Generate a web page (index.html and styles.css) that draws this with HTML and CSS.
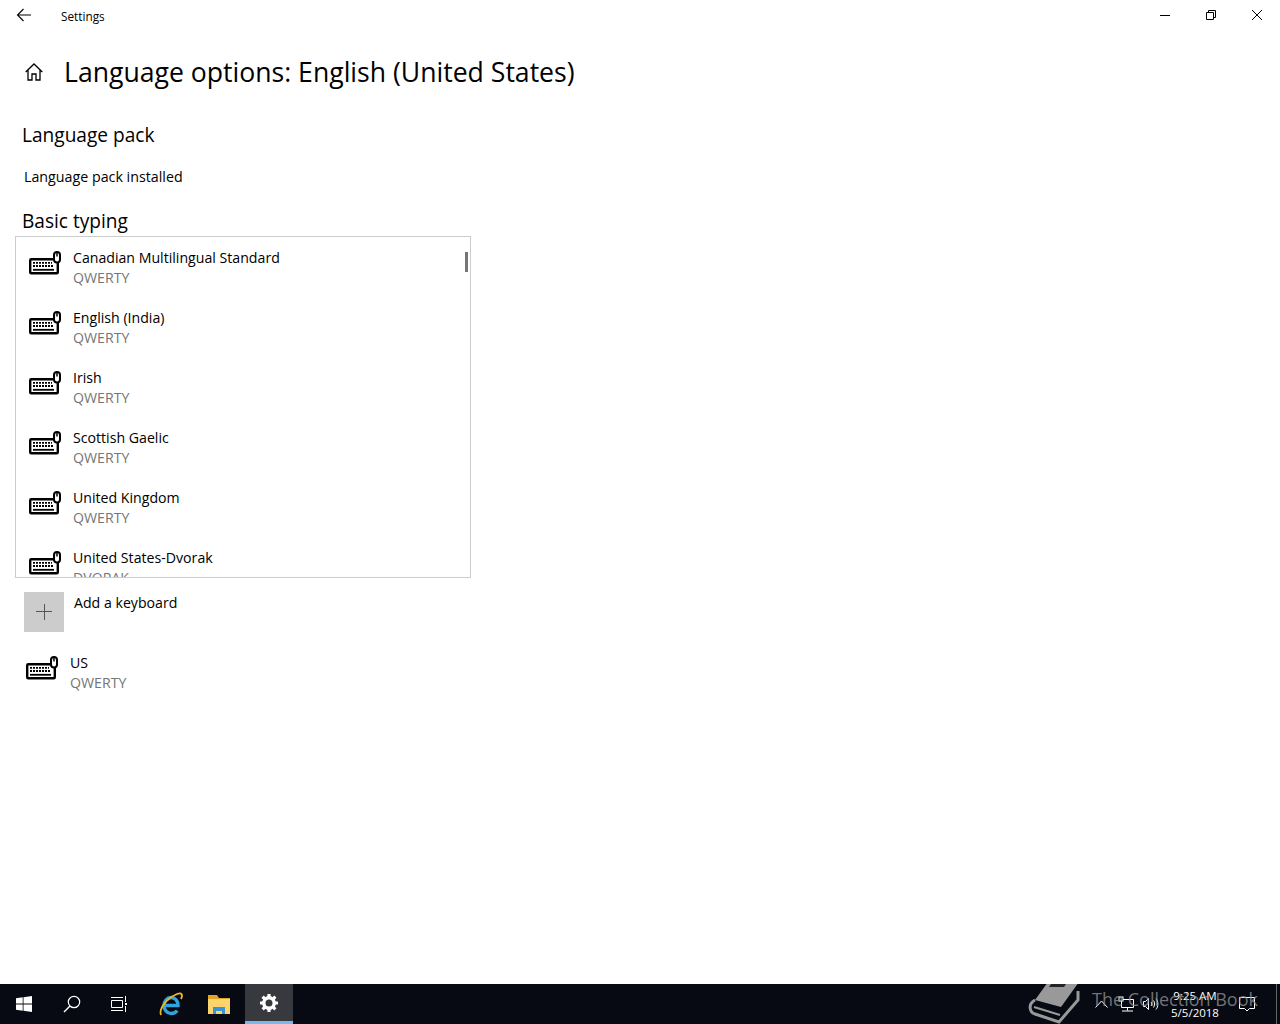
FILE: index.html
```html
<!DOCTYPE html>
<html lang="en">
<head>
<meta charset="utf-8">
<title>Settings</title>
<link rel="stylesheet" href="styles.css">
</head>
<body>
<svg class="defs" width="0" height="0">
  <symbol id="kbd" viewBox="0 0 32 24">
    <rect x="1.200" y="8.200" width="27.600" height="14" rx="1" fill="#fff" stroke="#000" stroke-width="2.400"/>
    <path d="M4 11.800h19M4 15h21" fill="none" stroke="#000" stroke-width="1.800" stroke-dasharray="2 1"/>
    <path d="M4 18.800h21" fill="none" stroke="#000" stroke-width="1.800"/>
    <rect x="25" y="1" width="6" height="10.500" rx="3" fill="#fff" stroke="#000" stroke-width="2"/>
    <path d="M28 2v3.500" stroke="#000" stroke-width="1.500"/>
  </symbol>
</svg>
<div class="window">
  <header class="titlebar">
    <svg class="back" width="16" height="16" viewBox="0 0 16 16"><path d="M15 8H1.500M7.500 2l-6 6 6 6" fill="none" stroke="#000" stroke-width="1.100"/></svg>
    <span class="app-name">Settings</span>
    <div class="controls">
      <div class="ctl"><svg width="10" height="10" viewBox="0 0 10 10"><path d="M0 5.500h10" stroke="#000"/></svg></div>
      <div class="ctl"><svg width="10" height="10" viewBox="0 0 10 10"><path d="M.5 2.500h7v7h-7zM2.500 2.500v-2h7v7h-2" fill="none" stroke="#000"/></svg></div>
      <div class="ctl"><svg width="10" height="10" viewBox="0 0 10 10"><path d="M0 0l10 10M10 0L0 10" stroke="#000"/></svg></div>
    </div>
  </header>
  <main class="content">
    <div class="page-head">
      <svg class="home" width="18" height="18" viewBox="0 0 18 18"><path d="M.7 9L9 1l8.300 8M3 7v10h4v-6h4v6h4V7" fill="none" stroke="#000" stroke-width="1.300"/></svg>
      <h1>Language options: English (United States)</h1>
    </div>
    <h2 class="sec-pack">Language pack</h2>
    <p class="installed">Language pack installed</p>
    <h2 class="sec-typing">Basic typing</h2>
    <div class="listbox">
      <ul class="list">
        <li class="row"><svg class="kbd"><use href="#kbd"/></svg><div class="label"><span class="name">Canadian Multilingual Standard</span><span class="sub">QWERTY</span></div></li>
        <li class="row"><svg class="kbd"><use href="#kbd"/></svg><div class="label"><span class="name">English (India)</span><span class="sub">QWERTY</span></div></li>
        <li class="row"><svg class="kbd"><use href="#kbd"/></svg><div class="label"><span class="name">Irish</span><span class="sub">QWERTY</span></div></li>
        <li class="row"><svg class="kbd"><use href="#kbd"/></svg><div class="label"><span class="name">Scottish Gaelic</span><span class="sub">QWERTY</span></div></li>
        <li class="row"><svg class="kbd"><use href="#kbd"/></svg><div class="label"><span class="name">United Kingdom</span><span class="sub">QWERTY</span></div></li>
        <li class="row"><svg class="kbd"><use href="#kbd"/></svg><div class="label"><span class="name">United States-Dvorak</span><span class="sub">DVORAK</span></div></li>
      </ul>
      <div class="thumb"></div>
    </div>
    <div class="add">
      <div class="add-btn"><svg width="16" height="16" viewBox="0 0 16 16"><path d="M8.500 0v16M0 7.500h16" stroke="#555" stroke-width="1"/></svg></div>
      <span class="name add-label">Add a keyboard</span>
    </div>
    <div class="current">
      <svg class="kbd"><use href="#kbd"/></svg>
      <div class="label"><span class="name">US</span><span class="sub">QWERTY</span></div>
    </div>
  </main>
  <footer class="taskbar">
    <div class="tb-btn"><svg width="16" height="16" viewBox="0 0 16 16"><path d="M0 2.300l6.700-1v6.300H0zM7.500 1.200L16 0v7.600H7.500zM0 8.400h6.700v6.300l-6.700-1zM7.500 8.400H16V16l-8.500-1.200z" fill="#fff"/></svg></div>
    <div class="tb-btn"><svg width="18" height="18" viewBox="0 0 18 18"><circle cx="11" cy="7" r="5.700" fill="none" stroke="#fff" stroke-width="1.200"/><path d="M7 11l-6 6" stroke="#fff" stroke-width="1.400"/></svg></div>
    <div class="tb-btn"><svg width="18" height="16" viewBox="0 0 18 16"><path d="M.5 4.500h11v7H.5zM0 1.500h12M0 14.500h12" fill="none" stroke="#fff"/><path d="M14.500 0v6M14.500 10v6" stroke="#fff"/><rect x="14" y="7" width="2" height="2" fill="#fff"/></svg></div>
    <div class="tb-btn tb-ie"><svg width="26" height="26" viewBox="0 0 26 26"><path d="M7 14.500h13c0-5-3-8-7-8s-7 3.500-7 8 3 8 7 8c3 0 5-1 6-3" fill="none" stroke="#2fa4de" stroke-width="3.400"/><path d="M3 24C1 19 6 9 19 3c5-2 6 1 4 5" fill="none" stroke="#f0b429" stroke-width="1.800"/></svg></div>
    <div class="tb-btn"><svg width="22" height="20" viewBox="0 0 22 20"><path d="M0 1h9l2 3h11v3H0z" fill="#e0a526"/><path d="M0 5h22v15H0z" fill="#fbd56b"/><path d="M5 13h12v7h-3v-3H8v3H5z" fill="#3a94d0"/></svg></div>
    <div class="tb-btn tb-active"><svg width="18" height="18" viewBox="0 0 18 18"><circle cx="9" cy="9" r="5.200" fill="none" stroke="#fff" stroke-width="3.400"/><path d="M9 0v3.500M9 14.500V18M0 9h3.500M14.500 9H18M2.600 2.600l2.500 2.500M12.900 12.900l2.500 2.500M15.400 2.600l-2.500 2.500M5.100 12.900l-2.500 2.500" stroke="#fff" stroke-width="3.200"/></svg></div>
    <div class="tray">
      <svg width="13" height="8" viewBox="0 0 13 8"><path d="M.5 7.500l6-6.500 6 6.500" fill="none" stroke="#fff"/></svg>
      <svg class="tray-net" width="16" height="16" viewBox="0 0 16 16"><path d="M3.500 3.500h12v8h-12zM9.500 11.500v3M4 15h11" fill="none" stroke="#fff"/><rect x="1" y="1" width="4" height="4" fill="#000" stroke="#fff"/></svg>
      <svg class="tray-vol" width="16" height="16" viewBox="0 0 16 16"><path d="M.5 5.500h2l3-3v11l-3-3h-2zM8 6c1 1 1 3 0 4M10.500 4.500c1.500 2 1.500 5 0 7M13 2.500c2.500 3 2.500 8 0 11" fill="none" stroke="#fff"/></svg>
      <div class="clock"><span>9:25 AM</span><span>5/5/2018</span></div>
      <svg class="tray-note" width="16" height="16" viewBox="0 0 16 16"><path d="M.5 1.500h15v11h-5l-2.500 2.500-2.500-2.500h-5z" fill="none" stroke="#fff"/></svg>
    </div>
    <div class="desk-edge"></div>
    <div class="watermark">
      <svg class="book" width="60" height="42" viewBox="0 0 60 42"><path d="M23 0h31L36 25 10 18z" fill="#999"/><path d="M26 2h15l-2 3H24z" fill="#22242a"/><path d="M10 18C3 22 4 30 10 32l24 8 19-22v-9" fill="none" stroke="#999" stroke-width="3"/><path d="M9 25l26 8" stroke="#999" stroke-width="2"/></svg>
      <span>The Collection Book</span>
    </div>
  </footer>
</div>
</body>
</html>
```
FILE: styles.css
```css
* { box-sizing: border-box; }
html, body { margin: 0; padding: 0; height: 100%; }
body { font-family: "Open Sans", "Noto Sans", "Liberation Sans", sans-serif; background: #fff; color: #000; overflow: hidden; }
.defs { display: block; height: 0; }
.window { display: flex; flex-direction: column; height: 1024px; }
.titlebar { flex: none; height: 30px; display: flex; align-items: center; padding-left: 16px; }
.back { flex: none; }
.app-name { margin-left: 29px; font-size: 11.800px; margin-top: 2px; }
.controls { margin-left: auto; display: flex; }
.ctl { width: 46px; height: 30px; display: flex; align-items: center; justify-content: center; }
.content { flex: 1; min-height: 0; padding: 0 0 0 15px; }
.page-head { display: flex; align-items: center; height: 40px; margin-top: 22px; padding-left: 10px; }
.home { flex: none; }
h1 { margin: 0 0 0 21px; font-size: 26.600px; font-weight: 400; line-height: 40px; white-space: nowrap; }
h2 { margin: 0; font-size: 19.100px; font-weight: 400; line-height: 28px; padding-left: 7px; }
.sec-pack { margin-top: 29px; }
.installed { margin: 18px 0 0 9px; font-size: 14.250px; line-height: 20px; }
.sec-typing { margin-top: 20px; height: 29px; }
.listbox { position: relative; width: 456px; height: 342px; border: 1px solid #ccc; overflow: hidden; }
.list { list-style: none; margin: 0; padding: 0; }
.row { display: flex; height: 60px; padding: 11px 0 0 13px; }
.kbd { flex: none; width: 32px; height: 24px; margin-top: 3px; }
.label { display: flex; flex-direction: column; margin-left: 12px; }
.name { font-size: 14.150px; line-height: 20px; white-space: nowrap; }
.sub { font-size: 14.150px; line-height: 20px; color: #767676; white-space: nowrap; }
.thumb { position: absolute; top: 15px; right: 2px; width: 3px; height: 20px; background: #767676; }
.add { display: flex; margin: 14px 0 0 9px; height: 40px; }
.add-btn { width: 40px; height: 40px; background: #ccc; display: flex; align-items: center; justify-content: center; }
.add-label { margin: 1px 0 0 10px; }
.current { display: flex; margin: 21px 0 0 11px; }
.taskbar { position: relative; flex: none; height: 40px; display: flex; background: #070a12; overflow: hidden; }
.tb-btn { width: 48px; height: 40px; display: flex; align-items: center; justify-content: center; flex: none; }
.tb-ie { margin-left: 3px; }
.tb-active { background: #37393e; border-bottom: 3px solid #76b9ed; margin-left: 2px; padding-top: 1px; }
.tray { margin-left: auto; display: flex; align-items: center; color: #fff; padding-right: 21px; }
.tray-net { margin-left: 10px; }
.tray-vol { margin-left: 9px; }
.clock { display: flex; flex-direction: column; align-items: center; font-size: 11.500px; line-height: 17px; margin-left: 10px; width: 52px; }
.tray-note { margin-left: 18px; }
.desk-edge { width: 1px; height: 40px; background: #666; margin-right: 3px; flex: none; }
.watermark { position: absolute; left: 1025px; top: 0; height: 40px; display: flex; align-items: center; color: rgba(150,150,150,.75); font-size: 18px; white-space: nowrap; pointer-events: none; }
.book { flex: none; margin-top: -2px; }
.watermark span { margin-left: 7px; margin-top: -10px; }
```
